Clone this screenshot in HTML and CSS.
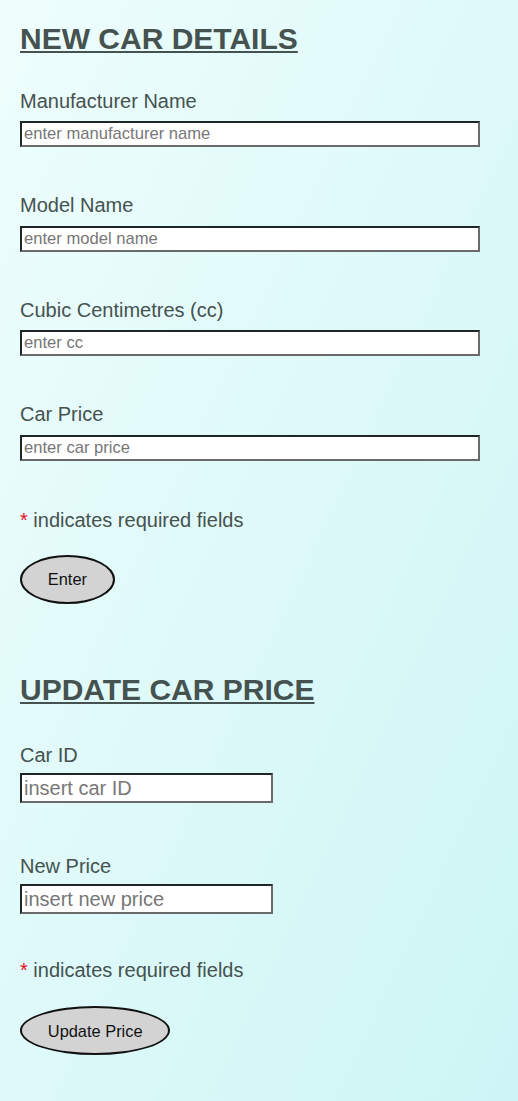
FILE: index.html
```html
<!DOCTYPE html>
<html lang="en">
<head>
<meta charset="utf-8">
<title>Cars</title>
<link rel="stylesheet" href="styles.css">
</head>
<body>
<main class="page">
  <form class="section section-new">
    <h1 class="title">NEW CAR DETAILS</h1>
    <div class="field">
      <label class="label" for="man">Manufacturer Name</label>
      <input class="input input-wide" id="man" type="text" placeholder="enter manufacturer name">
    </div>
    <div class="field">
      <label class="label" for="model">Model Name</label>
      <input class="input input-wide" id="model" type="text" placeholder="enter model name">
    </div>
    <div class="field">
      <label class="label" for="cc">Cubic Centimetres (cc)</label>
      <input class="input input-wide" id="cc" type="text" placeholder="enter cc">
    </div>
    <div class="field">
      <label class="label" for="price">Car Price</label>
      <input class="input input-wide" id="price" type="text" placeholder="enter car price">
    </div>
    <p class="note"><span class="star">*</span> indicates required fields</p>
    <button class="btn" type="button">Enter</button>
  </form>

  <form class="section section-update">
    <h2 class="title title-2">UPDATE CAR PRICE</h2>
    <div class="field field-2 first">
      <label class="label" for="carid">Car ID</label>
      <input class="input input-short" id="carid" type="text" placeholder="insert car ID">
    </div>
    <div class="field field-2">
      <label class="label" for="newprice">New Price</label>
      <input class="input input-short" id="newprice" type="text" placeholder="insert new price">
    </div>
    <p class="note note-2"><span class="star">*</span> indicates required fields</p>
    <button class="btn" type="button">Update Price</button>
  </form>
</main>
</body>
</html>
```

FILE: styles.css
```css
html {
  min-height: 100%;
  background: linear-gradient(to bottom right, #eefefd 0%, #def9f9 50%, #cdf5f5 100%);
}

body {
  margin: 0;
  min-height: 1101px;
  font-family: "Liberation Sans", Arial, sans-serif;
  color: #45524f;
}

.page {
  padding: 21.6px 20px 0 20px;
  display: flex;
  flex-direction: column;
}

.section {
  display: flex;
  flex-direction: column;
  align-items: flex-start;
  margin: 0;
}

.title {
  margin: 0;
  font-size: 30px;
  line-height: 34px;
  font-weight: bold;
  text-decoration: underline;
  text-decoration-thickness: 2px;
  text-underline-offset: 2px;
  color: #45524f;
}

.field {
  display: flex;
  flex-direction: column;
  align-items: flex-start;
}

.section-new .field {
  margin-bottom: 46px;
}

.section-new .field:first-of-type {
  margin-top: 33.2px;
}

.section-new .field:nth-of-type(4) {
  margin-bottom: 47.2px;
}

.label {
  display: block;
  font-size: 20px;
  line-height: 24px;
  margin-bottom: 8.5px;
}

.field-2 .label {
  margin-bottom: 6.5px;
}

.field-2.first {
  margin-top: 36.2px;
  margin-bottom: 51px;
}

.field-2 {
  margin-bottom: 44.5px;
}

.input {
  box-sizing: border-box;
  margin: 0;
  padding: 1px 2px;
  border-style: solid;
  border-width: 2px;
  border-color: #1f2626 #6a6a6a #6a6a6a #1f2626;
  background: #ffffff;
  font-family: "Liberation Sans", Arial, sans-serif;
  color: #222;
  outline: none;
}

.input::placeholder {
  color: #777777;
  opacity: 1;
}

.input-wide {
  width: 460px;
  height: 26px;
  font-size: 16.6px;
}

.input-short {
  width: 253px;
  height: 29.5px;
  font-size: 20px;
}

.note {
  margin: 0;
  font-size: 20px;
  line-height: 24px;
}

.star {
  color: #e8101a;
}

.btn {
  box-sizing: border-box;
  margin-top: 23px;
  height: 49px;
  padding: 0 25.8px;
  border: 2px solid #111111;
  border-radius: 50%;
  background: #d3d3d3;
  color: #111111;
  font-family: "Liberation Sans", Arial, sans-serif;
  font-size: 16.4px;
  line-height: 18px;
}

.section-update .btn {
  margin-top: 24px;
}

.section-update {
  margin-top: 68.6px;
}
```
